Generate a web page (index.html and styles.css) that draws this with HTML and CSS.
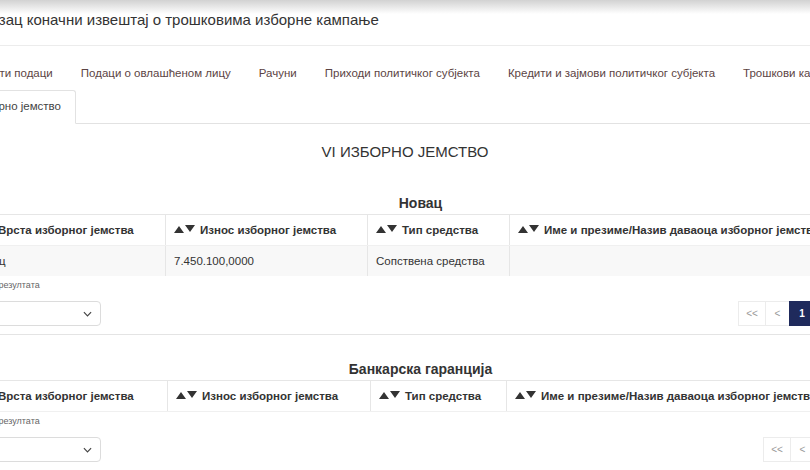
FILE: index.html
```html
<!DOCTYPE html>
<html lang="sr">
<head>
<meta charset="UTF-8">
<meta name="viewport" content="width=device-width, initial-scale=1.0">
<title>Коначни извештај</title>
<link rel="stylesheet" href="styles.css">
</head>
<body>
<div class="page">
    <h1 class="form-title">Образац коначни извештај о трошковима изборне кампање</h1>

    <ul class="tabs">
        <li><a href="#">Општи подаци</a></li>
        <li><a href="#">Подаци о овлашћеном лицу</a></li>
        <li><a href="#">Рачуни</a></li>
        <li><a href="#">Приходи политичког субјекта</a></li>
        <li><a href="#">Кредити и зајмови политичког субјекта</a></li>
        <li><a href="#">Трошкови кампање</a></li>
        <li class="active"><a href="#">Изборно јемство</a></li>
    </ul>

    <div class="tab-content">
        <h2 class="section-title">VI ИЗБОРНО ЈЕМСТВО</h2>

        <div class="guarantee">
            <h3>Новац</h3>
            <table class="grid money">
                <colgroup>
                    <col class="c1"><col class="c2"><col class="c3"><col>
                </colgroup>
                <thead>
                    <tr>
                        <th><svg class="sort" viewBox="0 0 22 8"><path d="M0 8L5 1L10 8Z M11 0L21 0L16 7Z"/></svg>Врста изборног јемства</th>
                        <th><svg class="sort" viewBox="0 0 22 8"><path d="M0 8L5 1L10 8Z M11 0L21 0L16 7Z"/></svg>Износ изборног јемства</th>
                        <th><svg class="sort" viewBox="0 0 22 8"><path d="M0 8L5 1L10 8Z M11 0L21 0L16 7Z"/></svg>Тип средства</th>
                        <th><svg class="sort" viewBox="0 0 22 8"><path d="M0 8L5 1L10 8Z M11 0L21 0L16 7Z"/></svg>Име и презиме/Назив даваоца изборног јемства</th>
                    </tr>
                </thead>
                <tbody>
                    <tr>
                        <td>Новац</td>
                        <td>7.450.100,0000</td>
                        <td>Сопствена средства</td>
                        <td></td>
                    </tr>
                </tbody>
            </table>
            <div class="table-footer">
                <div class="page-size">
                    <label>Број резултата</label>
                    <div class="select">10
                        <svg viewBox="0 0 10 6"><path d="M1 1L5 5L9 1"/></svg>
                    </div>
                </div>
                <ul class="pager">
                    <li>&lt;&lt;</li>
                    <li class="narrow">&lt;</li>
                    <li class="current">1</li>
                    <li class="narrow">&gt;</li>
                    <li>&gt;&gt;</li>
                </ul>
            </div>
        </div>

        <div class="guarantee">
            <h3>Банкарска гаранција</h3>
            <table class="grid bank">
                <colgroup>
                    <col class="c1"><col class="c2"><col class="c3"><col>
                </colgroup>
                <thead>
                    <tr>
                        <th><svg class="sort" viewBox="0 0 22 8"><path d="M0 8L5 1L10 8Z M11 0L21 0L16 7Z"/></svg>Врста изборног јемства</th>
                        <th><svg class="sort" viewBox="0 0 22 8"><path d="M0 8L5 1L10 8Z M11 0L21 0L16 7Z"/></svg>Износ изборног јемства</th>
                        <th><svg class="sort" viewBox="0 0 22 8"><path d="M0 8L5 1L10 8Z M11 0L21 0L16 7Z"/></svg>Тип средства</th>
                        <th><svg class="sort" viewBox="0 0 22 8"><path d="M0 8L5 1L10 8Z M11 0L21 0L16 7Z"/></svg>Име и презиме/Назив даваоца изборног јемства</th>
                    </tr>
                </thead>
                <tbody></tbody>
            </table>
            <div class="table-footer">
                <div class="page-size">
                    <label>Број резултата</label>
                    <div class="select">10
                        <svg viewBox="0 0 10 6"><path d="M1 1L5 5L9 1"/></svg>
                    </div>
                </div>
                <ul class="pager">
                    <li>&lt;&lt;</li>
                    <li class="narrow">&lt;</li>
                    <li class="narrow">&gt;</li>
                    <li>&gt;&gt;</li>
                </ul>
            </div>
        </div>
    </div>
</div>
</body>
</html>
```

FILE: styles.css
```css
body {
    margin: 0;
    overflow: hidden;
    font-family: "Liberation Sans", Arial, sans-serif;
    color: #333;
    background: #fff linear-gradient(to bottom, #d2d2d2 0, #fff 14px) no-repeat;
}
.page {
    margin-left: -50px;
    width: 940px;
}
.form-title {
    margin: 0;
    padding: 10px 0 15px 12px;
    font-size: 15px;
    line-height: 20px;
    font-weight: normal;
    color: #333;
    border-bottom: 1px solid #ececec;
}
.tabs {
    list-style: none;
    margin: 11px 0 0 11px;
    padding: 0;
    display: flex;
    flex-wrap: wrap;
    border-bottom: 1px solid #e2e2e2;
}
.tabs li a {
    display: block;
    padding: 9px 14px;
    font-size: 11.5px;
    line-height: 15px;
    color: #5c4444;
    text-decoration: none;
}
.tabs li.active {
    margin-left: -4px;
    border: 1px solid #e2e2e2;
    border-bottom-color: #fff;
    border-radius: 3px 3px 0 0;
    margin-bottom: -1px;
    background: #fff;
}
.tabs li.active a {
    padding: 8px 14px 9px 14px;
    color: #444;
}
.section-title {
    margin: 19px 0 8px;
    padding-right: 30px;
    text-align: center;
    font-size: 15px;
    line-height: 18px;
    font-weight: normal;
    color: #333;
}
.guarantee {
    padding: 25px 12px 0 13px;
    border-bottom: 1px solid #e4e4e4;
}
.guarantee h3 {
    margin: 0 0 2px;
    text-align: center;
    font-size: 14px;
    line-height: 18px;
    color: #333;
}
.grid {
    width: 100%;
    border-collapse: collapse;
    table-layout: fixed;
    font-size: 11.5px;
}
.money .c1 { width: 202px; }
.money .c2 { width: 202px; }
.money .c3 { width: 142px; }
.bank .c1 { width: 204px; }
.bank .c2 { width: 203px; }
.bank .c3 { width: 136px; }
.grid th {
    height: 30px;
    padding: 0 8px;
    text-align: left;
    font-weight: bold;
    white-space: nowrap;
    border: 1px solid #e6e6e6;
    border-bottom-color: #f0f0f0;
}
.sort {
    width: 22px;
    height: 8px;
    margin-right: 4px;
    vertical-align: 1px;
    fill: #333;
}
.grid td {
    height: 30px;
    padding: 0 8px;
    background: #f8f8f8;
    border-left: 1px solid #e6e6e6;
    border-right: 1px solid #e6e6e6;
    white-space: nowrap;
}
.table-footer {
    display: flex;
    justify-content: space-between;
    align-items: flex-end;
    padding-bottom: 8px;
}
.page-size {
    margin-left: 15px;
}
.page-size label {
    display: block;
    margin-top: 2px;
    font-size: 9px;
    line-height: 14px;
    color: #666;
}
.select {
    box-sizing: border-box;
    margin-top: 9px;
    width: 123px;
    height: 25px;
    border: 1px solid #dcdcdc;
    border-radius: 4px;
    display: flex;
    align-items: center;
    justify-content: space-between;
    padding: 0 4px 0 8px;
    font-size: 11px;
    color: #333;
}
.select svg {
    width: 9px;
    height: 6px;
    margin-right: 4px;
    fill: none;
    stroke: #444;
    stroke-width: 1.3;
}
.pager {
    list-style: none;
    margin: 0 12px 0 0;
    padding: 0;
    display: flex;
}
.pager li {
    width: 28px;
    height: 25px;
    box-sizing: border-box;
    border: 1px solid #ececec;
    margin-left: -1px;
    display: flex;
    align-items: center;
    justify-content: center;
    font-size: 10px;
    color: #9a9a9a;
}
.pager li.narrow {
    width: 25px;
}
.pager li.current {
    width: 26px;
    background: #1f2a5c;
    border-color: #1f2a5c;
    color: #fff;
    font-weight: bold;
}
```
